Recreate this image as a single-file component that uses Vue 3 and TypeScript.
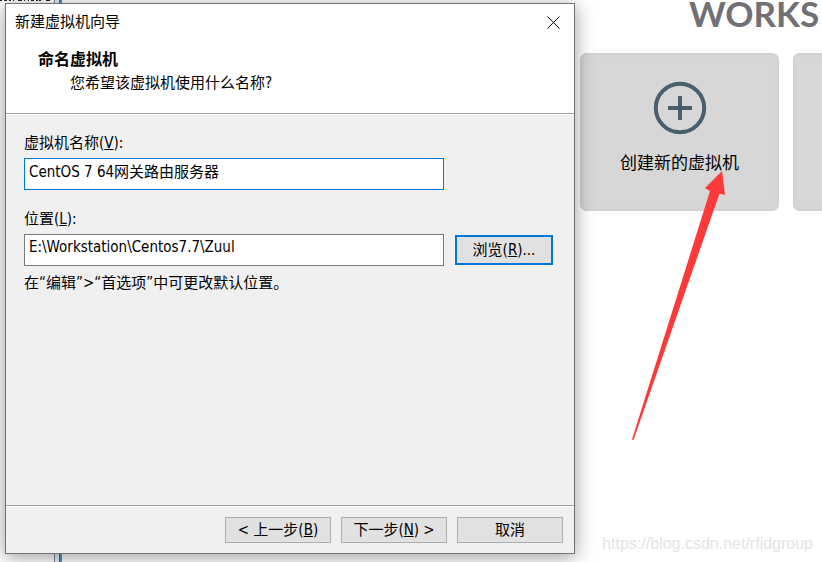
<script setup lang="ts">
import { ref } from 'vue'

const vmName = ref<string>('CentOS 7 64网关路由服务器')
const location = ref<string>('E:\\Workstation\\Centos7.7\\Zuul')
</script>

<template>
  <div class="desktop">
    <aside class="library">
      <svg class="scrolled" viewBox="0 0 54 2" aria-hidden="true">
        <path d="M0 .5h2M4 .5h3M9 .5h2M13 .5h1M18 .5h4M24 .5h1M28 .5h1M31 .5h3M36 .5h2M39 .5h2M46 .5h4" />
      </svg>
    </aside>
    <main class="home">
      <h1 class="brand">WORKS</h1>
      <div class="cards">
        <button class="card" type="button">
          <svg class="plus" viewBox="0 0 54 54" aria-hidden="true">
            <circle cx="27" cy="27" r="24.2" />
            <path d="M27 15v24M15 27h24" />
          </svg>
          <span>创建新的虚拟机</span>
        </button>
        <div class="card"></div>
      </div>
    </main>

    <section class="dialog" role="dialog" aria-labelledby="dialog-title">
      <header class="head">
        <div class="titlebar">
          <span id="dialog-title">新建虚拟机向导</span>
          <button class="close" type="button" aria-label="关闭">
            <svg viewBox="0 0 13 13" aria-hidden="true"><path d="M.5.5l12 12M12.5.5l-12 12" /></svg>
          </button>
        </div>
        <h2>命名虚拟机</h2>
        <p>您希望该虚拟机使用什么名称?</p>
      </header>
      <form class="body" @submit.prevent>
        <label for="vm-name">虚拟机名称(<u>V</u>):</label>
        <div class="row">
          <input id="vm-name" v-model="vmName" class="active" type="text" />
        </div>
        <label for="vm-location">位置(<u>L</u>):</label>
        <div class="row">
          <input id="vm-location" v-model="location" type="text" />
          <button class="btn browse" type="button">浏览(<u>R</u>)...</button>
        </div>
        <p class="hint">在“编辑”&gt;“首选项”中可更改默认位置。</p>
      </form>
      <footer class="foot">
        <button class="btn" type="button">&lt; 上一步(<u>B</u>)</button>
        <button class="btn" type="button">下一步(<u>N</u>) &gt;</button>
        <button class="btn" type="button">取消</button>
      </footer>
    </section>

    <svg class="arrow" viewBox="0 0 94 270" aria-hidden="true">
      <path d="M90 0L93 24L87.500 22.500L1.500 269L0 268.500L78 20L73 17Z" />
    </svg>
    <span class="watermark">https://blog.csdn.net/rfidgroup</span>
  </div>
</template>

<style>
body {
  margin: 0;
}
</style>

<style scoped>
.desktop {
  position: relative;
  display: flex;
  height: 100vh;
  min-height: 420px;
  overflow: hidden;
  background: #fff;
  color: #000;
  font-family: "DejaVu Sans Condensed", "Noto Sans", "Noto Sans CJK SC", sans-serif;
  font-size: 15px;
  line-height: 20px;
}
.library {
  flex: none;
  box-sizing: border-box;
  width: 62px;
  background: linear-gradient(90deg, #fff 54px, #7b8088 54px, #7b8088 55px, #f0f0f0 55px, #f0f0f0 59px, #60656b 59px, #60656b 60px, #4b97c5 60px);
}
.scrolled {
  display: block;
  width: 54px;
  height: 2px;
  stroke: #222;
}
.home {
  flex: 1;
  min-width: 0;
  padding-left: 518px;
}
.brand {
  margin: 0 0 26px 109px;
  color: #717074;
  font: 700 35px/27px Lato, sans-serif;
  white-space: nowrap;
}
.cards {
  display: flex;
  gap: 14px;
}
.card {
  flex: none;
  display: flex;
  flex-direction: column;
  align-items: center;
  gap: 17px;
  box-sizing: border-box;
  width: 199px;
  height: 158px;
  padding: 28px 0 0;
  border: 0;
  border-radius: 7px;
  background: #d7d7d7;
  box-shadow: inset 0 0 4px #c8c8c8;
  color: #000;
  font-family: inherit;
  font-size: 17px;
  line-height: 22px;
}
.plus {
  width: 54px;
  height: 54px;
  fill: none;
  stroke: #4b5e6b;
  stroke-width: 4;
}
.dialog {
  position: absolute;
  top: 3px;
  bottom: 8px;
  left: 5px;
  display: flex;
  flex-direction: column;
  box-sizing: border-box;
  width: 570px;
  border: 1px solid #707274;
  background: #f0f0f0;
  box-shadow: 0 3px 18px rgba(0, 0, 0, 0.4);
}
.head {
  box-sizing: border-box;
  height: 110px;
  border-bottom: 1px solid #a0a0a0;
  background: #fff;
}
.titlebar {
  display: flex;
  align-items: center;
  justify-content: space-between;
  height: 36px;
  padding: 0 14px 0 9px;
}
.close {
  display: flex;
  padding: 0;
  border: 0;
  background: none;
}
.close svg {
  width: 13px;
  height: 13px;
  fill: none;
  stroke: #000;
}
h2 {
  margin: 9px 0 0 32px;
  font-size: 16px;
  line-height: 22px;
}
.head p {
  margin: 2px 0 0 64px;
}
.body {
  flex: 1;
  display: flex;
  flex-direction: column;
  padding: 18px 18px 0;
  border-top: 1px solid #fff;
}
label {
  align-self: flex-start;
  margin-bottom: 5px;
}
.row {
  display: flex;
  align-items: center;
  gap: 11px;
  margin-bottom: 19px;
}
input {
  box-sizing: border-box;
  width: 420px;
  height: 32px;
  padding: 0 4px 7px;
  border: 1px solid #7a7a7a;
  border-radius: 0;
  outline: 0;
  background: #fff;
  color: #000;
  font: inherit;
}
input.active {
  border-color: #0078d7;
}
.hint {
  margin: -12px 0 0;
}
.btn {
  box-sizing: border-box;
  width: 106px;
  height: 26px;
  padding: 0;
  border: 1px solid #adadad;
  background: #e1e1e1;
  color: #000;
  font: inherit;
}
.browse {
  width: 98px;
  height: 30px;
  border: 2px solid #0078d7;
}
.foot {
  display: flex;
  justify-content: flex-end;
  gap: 10px;
  padding: 11px 11px 10px;
  border-top: 1px solid #a0a0a0;
  box-shadow: inset 0 1px #fff;
}
.arrow {
  position: absolute;
  top: 171px;
  left: 632px;
  width: 94px;
  height: 270px;
  fill: #fd3a39;
}
.watermark {
  position: absolute;
  right: 9px;
  bottom: 8px;
  color: #e4e4e4;
  font-family: "Liberation Sans", sans-serif;
  font-size: 16px;
}
</style>
